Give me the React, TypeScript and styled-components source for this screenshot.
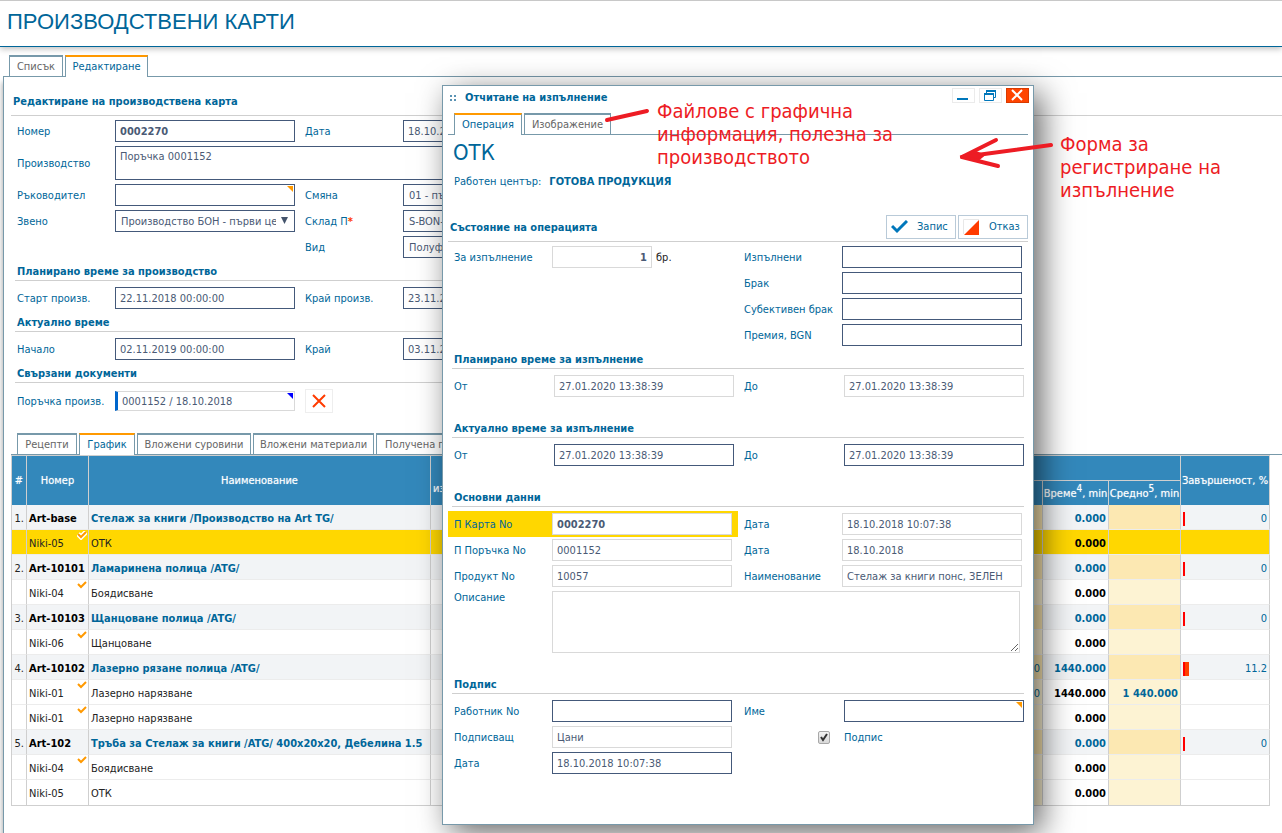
import React from 'react';
import type { ReactNode } from 'react';
import styled, { createGlobalStyle, css } from 'styled-components';

const color = {
  brand: '#006699',
  frame: '#7799aa',
  field: '#44597a',
  readonly: '#d9d9d9',
  value: '#4a5a75',
  rule: '#cfcfcf',
  accent: '#ff9900',
  highlight: '#ffd700',
  danger: '#ff3b00',
  note: '#ed1c24',
};

const GlobalStyle = createGlobalStyle`
  *, *::before, *::after { box-sizing: border-box; }
  body {
    margin: 0;
    background: #fff;
    color: #222;
    font: 11px/14px "DejaVu Sans Condensed", "DejaVu Sans", sans-serif;
  }
  input, textarea, select, button { font: inherit; margin: 0; }
`;

/* ---------- page frame ---------- */

const Page = styled.div`
  position: relative;
  display: flex;
  flex-direction: column;
  min-height: 100vh;
  overflow: hidden;
`;

const PageHeader = styled.header`
  height: 47px;
  padding-left: 7px;
  border-top: 1px solid #c8c8c8;
  border-bottom: 1px solid ${color.brand};
  box-shadow: 0 2px 6px rgba(0, 0, 0, 0.25);
`;

const PageTitle = styled.h1`
  margin: 0;
  font: 22px/41px "Liberation Sans", Arial, sans-serif;
  color: ${color.brand};
`;

const TabBar = styled.nav<{ $indent: number }>`
  display: flex;
  gap: 2px;
  padding-left: ${(p) => p.$indent}px;
`;

const Tab = styled.button<{ $active?: boolean; $width: number }>`
  flex: none;
  width: ${(p) => p.$width}px;
  height: 21px;
  padding: 0;
  white-space: nowrap;
  background: #fff;
  color: #666;
  border: 1px solid ${color.frame};
  border-top: 2px solid ${color.frame};
  border-bottom: 0;
  ${(p) =>
    p.$active &&
    css`
      position: relative;
      height: 22px;
      margin-bottom: -1px;
      color: ${color.brand};
      border-top-color: ${color.accent};
    `}
`;

const Panel = styled.main`
  flex: 1;
  margin-left: 3px;
  padding-left: 7px;
  border: solid ${color.frame};
  border-width: 1px 0 0 1px;
  box-shadow: -1px 6px 5px rgba(0, 0, 0, 0.3);
`;

const PageTabs = styled.div`
  padding-top: 8px;
`;

/* ---------- form parts ---------- */

const Heading = styled.h2`
  margin: 10px 0 2px;
  padding: 2px 0 0 2px;
  font-size: 11px;
  line-height: 26px;
  color: ${color.brand};
  border-bottom: 1px solid ${color.rule};
`;

const SubHeading = styled.h3<{ $spaced?: boolean }>`
  margin: ${(p) => (p.$spaced ? 18 : 0)}px 4px 4px;
  padding: 4px 0 0 2px;
  font-size: 11px;
  line-height: 16px;
  color: ${color.brand};
  border-bottom: 1px solid ${color.rule};
`;

const EditForm = styled.form`
  width: 578px;
`;

const Row = styled.div<{ $pair: number; $tall?: boolean }>`
  display: grid;
  grid-template-columns: ${(p) => p.$pair}px 1fr;
  min-height: ${(p) => (p.$tall ? 28 : 26)}px;
`;

const Pair = styled.div<{ $label?: number; $highlight?: boolean; $wide?: boolean; $second?: boolean }>`
  display: grid;
  grid-template-columns: ${(p) => p.$label ?? 104}px 1fr;
  align-items: center;
  ${(p) => p.$highlight && `background: ${color.highlight};`}
  ${(p) => p.$wide && 'grid-column: 1 / -1;'}
  ${(p) => p.$second && 'grid-column: 2;'}
`;

const Label = styled.label<{ $top?: boolean }>`
  padding: 2px 0 0 6px;
  color: ${color.brand};
  white-space: nowrap;
  ${(p) => p.$top && 'align-self: start; padding-top: 0;'}
`;

const Required = styled.span`
  font-weight: 700;
  color: ${color.danger};
`;

const fieldLook = css<{ $readonly?: boolean }>`
  background: #fff;
  color: ${color.value};
  border: 1px solid ${(p) => (p.$readonly ? color.readonly : color.field)};
  border-radius: 0;
  outline: 0;
`;

const Input = styled.input<{ $readonly?: boolean; $bold?: boolean; $amount?: boolean }>`
  ${fieldLook}
  display: block;
  width: ${(p) => (p.$amount ? 100 : 180)}px;
  height: 22px;
  padding: 1px 4px 0;
  font-weight: ${(p) => (p.$bold ? 700 : 400)};
  text-align: ${(p) => (p.$amount ? 'right' : 'left')};
`;

const TextArea = styled.textarea<{ $readonly?: boolean; $height: number }>`
  ${fieldLook}
  display: block;
  height: ${(p) => p.$height}px;
  width: 468px;
  padding: 3px 4px;
  resize: ${(p) => (p.$readonly ? 'both' : 'none')};
`;

const LinkInput = styled(Input)`
  height: 20px;
  border-left: 3px solid #0066cc;
  padding-top: 0;
`;

const FieldBox = styled.div`
  position: relative;
  width: 180px;
`;

const Corner = styled.svg`
  position: absolute;
  top: 2px;
  right: 2px;
  width: 6px;
  height: 6px;
`;

const Select = styled.select`
  ${fieldLook}
  display: block;
  appearance: none;
  width: 180px;
  height: 22px;
  padding: 2px 18px 0 5px;
`;

const SelectArrow = styled.svg`
  position: absolute;
  top: 7px;
  right: 7px;
  width: 7px;
  height: 7px;
  pointer-events: none;
`;

const Inline = styled.div`
  display: flex;
  align-items: center;
  gap: 4px;
`;

const Unit = styled.span`
  padding-top: 2px;
`;

const LinkedDoc = styled.div`
  display: flex;
  align-items: center;
  gap: 10px;
`;

const RemoveButton = styled.button`
  display: grid;
  place-items: center;
  width: 28px;
  height: 24px;
  padding: 0;
  background: #fff;
  border: 1px solid #eee;
`;

/* ---------- schedule table ---------- */

const DetailTabs = styled.div`
  margin-top: 18px;
  border-bottom: 1px solid ${color.frame};
`;

const Table = styled.table`
  table-layout: fixed;
  width: calc(100% - 12px);
  border-collapse: separate;
  border-spacing: 0;
  border: solid ${color.rule};
  border-width: 1px 0 1px 1px;
`;

const Col = styled.col<{ $w?: number }>`
  ${(p) => p.$w && `width: ${p.$w}px;`}
`;

const Th = styled.th<{ $line?: boolean }>`
  height: ${(p) => (p.$line ? 25 : 24)}px;
  padding: 0;
  white-space: nowrap;
  overflow: hidden;
  background: #3388bb;
  color: #fff;
  font-weight: 400;
  text-shadow: 0 0 1px rgba(255, 255, 255, 0.6);
  border-right: 1px solid ${color.rule};
  ${(p) => p.$line && `border-bottom: 1px solid ${color.rule};`}

  sup { font-size: 10px; line-height: 0; }
`;

const ThLow = styled(Th)`
  padding-top: 2px;
`;

const ThLeft = styled(Th)`
  padding: 17px 0 0 2px;
  text-align: left;
`;

type RowKind = 'item' | 'step' | 'current';

const Tr = styled.tr<{ $kind: RowKind }>`
  background: ${(p) => ({ item: '#f2f4f6', step: '#fff', current: color.highlight })[p.$kind]};
  &:last-child td { border-bottom: 0; }
`;

const Td = styled.td<{ $bold?: boolean; $blue?: boolean; $right?: boolean; $dark?: boolean; $shade?: RowKind }>`
  position: relative;
  height: 25px;
  padding: 3px 2px 0;
  white-space: nowrap;
  overflow: hidden;
  color: ${(p) => (p.$blue ? color.brand : p.$dark ? '#000' : '#222')};
  font-weight: ${(p) => (p.$bold ? 700 : 400)};
  text-align: ${(p) => (p.$right ? 'right' : 'left')};
  border-right: 1px solid ${color.rule};
  border-bottom: 1px solid #ececec;
  ${(p) => p.$shade === 'item' && 'background: #fce8b2;'}
  ${(p) => p.$shade === 'step' && 'background: #fdf3d3;'}
`;

const DoneMark = styled.svg`
  position: absolute;
  top: 1px;
  right: 1px;
  width: 10px;
  height: 9px;
`;

const Completion = styled.div`
  display: flex;
  justify-content: space-between;
  align-items: center;
`;

const Bar = styled.span<{ $partial: boolean }>`
  width: ${(p) => (p.$partial ? 6 : 2)}px;
  height: 14px;
  background: #ff4000;
  border-left: 2px solid #ff0000;
`;

/* ---------- dialog ---------- */

const Dialog = styled.section`
  position: absolute;
  top: 85px;
  left: 442px;
  width: 592px;
  padding: 0 5px 48px;
  background: #fff;
  border: 1px solid ${color.frame};
  box-shadow: 8px 8px 30px rgba(0, 0, 0, 0.6);
`;

const TitleBar = styled.header`
  display: flex;
  align-items: center;
  height: 22px;
  color: ${color.brand};
`;

const Grip = styled.svg`
  width: 7px;
  height: 7px;
  margin: 2px 8px 0 2px;
`;

const DialogTitle = styled.h2`
  flex: 1;
  margin: 0;
  padding-top: 2px;
  font-size: 11px;
`;

const WindowButtons = styled.div`
  display: flex;
  gap: 4px;
  margin-right: -1px;
  padding-bottom: 3px;
`;

const WindowButton = styled.button<{ $close?: boolean }>`
  display: grid;
  place-items: center;
  width: 23px;
  height: 15px;
  padding: 0;
  background: ${(p) => (p.$close ? '#ff4400' : '#fff')};
  border: 1px solid ${(p) => (p.$close ? '#d93a00' : '#ebebeb')};
`;

const DialogTabs = styled.div`
  margin-top: 5px;
  border-bottom: 1px solid ${color.frame};
`;

const OperationName = styled.div`
  padding: 2px 0 0 5px;
  font-size: 22px;
  line-height: 32px;
  color: ${color.brand};
`;

const WorkCenter = styled.p`
  margin: 0 0 20px;
  padding: 2px 0 0 6px;
  display: flex;
  gap: 8px;
  line-height: 22px;
  color: ${color.brand};
`;

const StateBar = styled.div`
  display: flex;
  align-items: center;
  gap: 2px;
  height: 29px;
  margin-bottom: 2px;
  border-bottom: 1px solid ${color.rule};
`;

const StateTitle = styled.h3`
  flex: 1;
  margin: 0;
  padding: 2px 0 0 2px;
  font-size: 11px;
  color: ${color.brand};
`;

const ActionButton = styled.button`
  display: flex;
  align-items: center;
  gap: 9px;
  width: 70px;
  height: 24px;
  padding: 0 0 0 4px;
  background: #fff;
  color: ${color.brand};
  border: 1px solid #b9cad8;
`;

const CheckCell = styled.div`
  position: relative;
  justify-self: end;
  margin-right: 14px;
  width: 12px;
  height: 13px;
`;

const CheckBox = styled.input`
  appearance: none;
  display: block;
  width: 12px;
  height: 13px;
  border: 1px solid #a8a8a8;
  border-radius: 2px;
  background: linear-gradient(#f2f2f2, #d8d8d8);
`;

const CheckGlyph = styled.svg`
  position: absolute;
  top: 0;
  left: 0;
  width: 12px;
  height: 13px;
  pointer-events: none;
`;

const CheckLabel = styled.label`
  padding-top: 2px;
  color: ${color.brand};
`;

const DescriptionPair = styled(Pair)`
  padding: 2px 0;
`;

/* ---------- annotations ---------- */

const Note = styled.p<{ $x: number; $y: number }>`
  position: absolute;
  left: ${(p) => p.$x}px;
  top: ${(p) => p.$y}px;
  margin: 0;
  font-size: 20px;
  line-height: 23px;
  white-space: nowrap;
  color: ${color.note};
`;

const Arrows = styled.svg`
  position: absolute;
  top: 100px;
  left: 600px;
  width: 460px;
  height: 80px;
  pointer-events: none;
`;

/* ---------- helpers ---------- */

type FieldProps = {
  id: string;
  label: ReactNode;
  value?: string;
  readonly?: boolean;
  bold?: boolean;
  highlight?: boolean;
  second?: boolean;
  labelWidth?: number;
  corner?: string;
};

function CornerMark({ fill }: { fill: string }) {
  return (
    <Corner viewBox="0 0 6 6" aria-hidden="true">
      <path d="M0 0H6V6Z" fill={fill} />
    </Corner>
  );
}

function Field({ id, label, value = '', readonly, bold, highlight, second, labelWidth, corner }: FieldProps) {
  return (
    <Pair $label={labelWidth} $highlight={highlight} $second={second}>
      <Label htmlFor={id}>{label}</Label>
      <FieldBox>
        <Input id={id} defaultValue={value} readOnly={readonly} $readonly={readonly} $bold={bold} />
        {corner && <CornerMark fill={corner} />}
      </FieldBox>
    </Pair>
  );
}

function SelectField({ id, label, value, second }: { id: string; label: ReactNode; value: string; second?: boolean }) {
  return (
    <Pair $second={second}>
      <Label htmlFor={id}>{label}</Label>
      <FieldBox>
        <Select id={id} defaultValue={value}>
          <option>{value}</option>
        </Select>
        <SelectArrow viewBox="0 0 7 7" aria-hidden="true">
          <path d="M0 0H7L3.5 7Z" fill="#44546c" />
        </SelectArrow>
      </FieldBox>
    </Pair>
  );
}

type ScheduleRow = {
  kind: RowKind;
  no?: string;
  code: string;
  name: string;
  done?: boolean;
  planned?: string;
  time: string;
  average?: string;
  percent?: string;
};

const schedule: ScheduleRow[] = [
  { kind: 'item', no: '1.', code: 'Art-base', name: 'Стелаж за книги /Производство на Art TG/', time: '0.000', percent: '0' },
  { kind: 'current', code: 'Niki-05', name: 'ОТК', done: true, time: '0.000' },
  { kind: 'item', no: '2.', code: 'Art-10101', name: 'Ламаринена полица /ATG/', time: '0.000', percent: '0' },
  { kind: 'step', code: 'Niki-04', name: 'Боядисване', done: true, time: '0.000' },
  { kind: 'item', no: '3.', code: 'Art-10103', name: 'Щанцоване полица /ATG/', time: '0.000', percent: '0' },
  { kind: 'step', code: 'Niki-06', name: 'Щанцоване', done: true, time: '0.000' },
  { kind: 'item', no: '4.', code: 'Art-10102', name: 'Лазерно рязане полица /ATG/', planned: '0', time: '1440.000', percent: '11.2' },
  { kind: 'step', code: 'Niki-01', name: 'Лазерно нарязване', done: true, planned: '0', time: '1440.000', average: '1 440.000' },
  { kind: 'step', code: 'Niki-01', name: 'Лазерно нарязване', done: true, time: '0.000' },
  { kind: 'item', no: '5.', code: 'Art-102', name: 'Тръба за Стелаж за книги /ATG/ 400x20x20, Дебелина 1.5', time: '0.000', percent: '0' },
  { kind: 'step', code: 'Niki-04', name: 'Боядисване', done: true, time: '0.000' },
  { kind: 'step', code: 'Niki-05', name: 'ОТК', time: '0.000' },
];

function ScheduleTable() {
  return (
    <Table>
      <colgroup>
        <Col $w={15} />
        <Col $w={62} />
        <Col $w={342} />
        <Col />
        <Col $w={72} />
        <Col $w={66} />
        <Col $w={72} />
        <Col $w={89} />
      </colgroup>
      <thead>
        <tr>
          <Th rowSpan={2}>#</Th>
          <Th rowSpan={2}>Номер</Th>
          <Th rowSpan={2}>Наименование</Th>
          <ThLeft rowSpan={2}>из</ThLeft>
          <Th colSpan={3} $line />
          <Th rowSpan={2}>Завършеност, %</Th>
        </tr>
        <tr>
          <Th />
          <ThLow>Време<sup>4</sup>, min</ThLow>
          <ThLow>Средно<sup>5</sup>, min</ThLow>
        </tr>
      </thead>
      <tbody>
        {schedule.map((row, i) => {
          const item = row.kind === 'item';
          return (
            <Tr key={i} $kind={row.kind}>
              <Td $right>{row.no}</Td>
              <Td $bold={item} $dark={item}>
                {row.code}
                {row.done && (
                  <DoneMark viewBox="0 0 10 9" aria-hidden="true">
                    {row.kind === 'current' && (
                      <path d="M1 3L4 6L9 1" fill="none" stroke="#fff" strokeWidth="5" />
                    )}
                    <path d="M1 3L4 6L9 1" fill="none" stroke={color.accent} strokeWidth="2" />
                  </DoneMark>
                )}
              </Td>
              <Td $bold={item} $blue={item}>{row.name}</Td>
              <Td />
              <Td $shade={row.kind} $right $blue>{row.planned}</Td>
              <Td $right $bold $dark $blue={item}>{row.time}</Td>
              <Td $shade={row.kind} $right $bold $blue>{row.average}</Td>
              <Td $blue>
                {row.percent && (
                  <Completion>
                    <Bar $partial={row.percent !== '0'} />
                    {row.percent}
                  </Completion>
                )}
              </Td>
            </Tr>
          );
        })}
      </tbody>
    </Table>
  );
}

function ReportDialog() {
  return (
    <Dialog role="dialog" aria-labelledby="dialog-title">
      <TitleBar>
        <Grip viewBox="0 0 7 7" aria-hidden="true">
          <path d="M0 0h2v2H0zM4 0h2v2H4zM0 4h2v2H0zM4 4h2v2H4z" fill="#5a93b4" />
        </Grip>
        <DialogTitle id="dialog-title">Отчитане на изпълнение</DialogTitle>
        <WindowButtons>
          <WindowButton aria-label="Минимизиране">
            <svg width="21" height="13" viewBox="0 0 21 13"><path d="M4 9h11v2H4z" fill="#0077bb" /></svg>
          </WindowButton>
          <WindowButton aria-label="Възстановяване">
            <svg width="21" height="13" viewBox="0 0 21 13" fill="none" stroke="#0077bb">
              <path d="M6.5 4V1.5H15.5V8.5H14M4.5 5.5H13.5V11.5H4.5Z" />
              <path d="M6 2H16M4 5H14" strokeWidth="2" />
            </svg>
          </WindowButton>
          <WindowButton $close aria-label="Затваряне">
            <svg width="21" height="13" viewBox="0 0 21 13"><path d="M5 1L15 11M15 1L5 11" stroke="#fff" strokeWidth="2" /></svg>
          </WindowButton>
        </WindowButtons>
      </TitleBar>

      <DialogTabs>
        <TabBar $indent={6}>
          <Tab type="button" $active $width={68}>Операция</Tab>
          <Tab type="button" $width={87}>Изображение</Tab>
        </TabBar>
      </DialogTabs>

      <OperationName>ОТК</OperationName>
      <WorkCenter>
        <span>Работен център:</span>
        <strong>ГОТОВА ПРОДУКЦИЯ</strong>
      </WorkCenter>

      <form>
        <StateBar>
          <StateTitle>Състояние на операцията</StateTitle>
          <ActionButton type="button">
            <svg width="17" height="14" viewBox="0 0 17 14" aria-hidden="true">
              <path d="M1 6L6 11L16 1" fill="none" stroke="#0077bb" strokeWidth="3" />
            </svg>
            Запис
          </ActionButton>
          <ActionButton type="button">
            <svg width="17" height="16" viewBox="0 0 17 16" aria-hidden="true">
              <path d="M0.5 15V0.5H16" fill="none" stroke="#e8e8e8" />
              <path d="M1 16L16 1V16Z" fill={color.danger} />
            </svg>
            Отказ
          </ActionButton>
        </StateBar>

        <Row $pair={290}>
          <Pair>
            <Label htmlFor="todo">За изпълнение</Label>
            <Inline>
              <Input id="todo" defaultValue="1" readOnly $readonly $bold $amount />
              <Unit>бр.</Unit>
            </Inline>
          </Pair>
          <Field id="done" label="Изпълнени" />
        </Row>
        <Row $pair={290}><Field id="scrap" label="Брак" second /></Row>
        <Row $pair={290}><Field id="subjective" label="Субективен брак" second /></Row>
        <Row $pair={290}><Field id="bonus" label="Премия, BGN" second /></Row>

        <SubHeading>Планирано време за изпълнение</SubHeading>
        <Row $pair={290}>
          <Field id="plan-from" label="От" value="27.01.2020 13:38:39" readonly labelWidth={106} />
          <Field id="plan-to" label="До" value="27.01.2020 13:38:39" readonly labelWidth={106} />
        </Row>

        <SubHeading $spaced>Актуално време за изпълнение</SubHeading>
        <Row $pair={290}>
          <Field id="real-from" label="От" value="27.01.2020 13:38:39" labelWidth={106} />
          <Field id="real-to" label="До" value="27.01.2020 13:38:39" labelWidth={106} />
        </Row>

        <SubHeading $spaced>Основни данни</SubHeading>
        <Row $pair={290}>
          <Field id="card-no" label="П Карта No" value="0002270" readonly bold highlight />
          <Field id="card-date" label="Дата" value="18.10.2018 10:07:38" readonly />
        </Row>
        <Row $pair={290}>
          <Field id="order-no" label="П Поръчка No" value="0001152" readonly />
          <Field id="order-date" label="Дата" value="18.10.2018" readonly />
        </Row>
        <Row $pair={290}>
          <Field id="product-no" label="Продукт No" value="10057" readonly />
          <Field id="product-name" label="Наименование" value="Стелаж за книги понс, ЗЕЛЕН" readonly />
        </Row>
        <Row $pair={290}>
          <DescriptionPair $wide>
            <Label htmlFor="description" $top>Описание</Label>
            <TextArea id="description" readOnly $readonly $height={62} />
          </DescriptionPair>
        </Row>

        <SubHeading $spaced>Подпис</SubHeading>
        <Row $pair={290}>
          <Field id="worker-no" label="Работник No" />
          <Field id="worker-name" label="Име" labelWidth={106} corner={color.accent} />
        </Row>
        <Row $pair={290}>
          <Field id="signer" label="Подписващ" value="Цани" readonly />
          <Pair $label={106}>
            <CheckCell>
              <CheckBox type="checkbox" id="signed" defaultChecked />
              <CheckGlyph viewBox="0 0 12 13" aria-hidden="true">
                <path d="M3 6L5 9L9 3" fill="none" stroke="#333" strokeWidth="2" />
              </CheckGlyph>
            </CheckCell>
            <CheckLabel htmlFor="signed">Подпис</CheckLabel>
          </Pair>
        </Row>
        <Row $pair={290}>
          <Field id="sign-date" label="Дата" value="18.10.2018 10:07:38" />
        </Row>
      </form>
    </Dialog>
  );
}

export default function App() {
  return (
    <Page>
      <GlobalStyle />
      <PageHeader>
        <PageTitle>ПРОИЗВОДСТВЕНИ КАРТИ</PageTitle>
      </PageHeader>

      <PageTabs>
        <TabBar $indent={9}>
          <Tab type="button" $width={54}>Списък</Tab>
          <Tab type="button" $active $width={83}>Редактиране</Tab>
        </TabBar>
      </PageTabs>

      <Panel>
        <Heading>Редактиране на производствена карта</Heading>
        <EditForm>
          <Row $pair={288}>
            <Field id="no" label="Номер" value="0002270" bold />
            <Field id="date" label="Дата" value="18.10.2018" />
          </Row>
          <Row $pair={288}>
            <DescriptionPair $wide>
              <Label htmlFor="production">Производство</Label>
              <TextArea id="production" defaultValue="Поръчка 0001152" $height={34} />
            </DescriptionPair>
          </Row>
          <Row $pair={288}>
            <Field id="manager" label="Ръководител" corner={color.accent} />
            <SelectField id="shift" label="Смяна" value="01 - първа" />
          </Row>
          <Row $pair={288}>
            <SelectField id="unit" label="Звено" value="Производство БОН - първи цех" />
            <SelectField id="store" label={<>Склад П<Required>*</Required></>} value="S-BON-01" />
          </Row>
          <Row $pair={288}>
            <SelectField id="type" label="Вид" value="Полуфабрикат" second />
          </Row>

          <SubHeading>Планирано време за производство</SubHeading>
          <Row $pair={288}>
            <Field id="start-plan" label="Старт произв." value="22.11.2018 00:00:00" />
            <Field id="end-plan" label="Край произв." value="23.11.2018 00:00:00" />
          </Row>

          <SubHeading>Актуално време</SubHeading>
          <Row $pair={288}>
            <Field id="start-real" label="Начало" value="02.11.2019 00:00:00" />
            <Field id="end-real" label="Край" value="03.11.2019 00:00:00" />
          </Row>

          <SubHeading>Свързани документи</SubHeading>
          <Row $pair={288} $tall>
            <Pair $wide>
              <Label htmlFor="source-order">Поръчка произв.</Label>
              <LinkedDoc>
                <FieldBox>
                  <LinkInput id="source-order" defaultValue="0001152 / 18.10.2018" $readonly />
                  <CornerMark fill="#0000ff" />
                </FieldBox>
                <RemoveButton type="button" aria-label="Премахване">
                  <svg width="14" height="14" viewBox="0 0 14 14">
                    <path d="M1 1L13 13M13 1L1 13" stroke={color.danger} strokeWidth="2" />
                  </svg>
                </RemoveButton>
              </LinkedDoc>
            </Pair>
          </Row>
        </EditForm>

        <DetailTabs>
          <TabBar $indent={6}>
            <Tab type="button" $width={60}>Рецепти</Tab>
            <Tab type="button" $active $width={56}>График</Tab>
            <Tab type="button" $width={114}>Вложени суровини</Tab>
            <Tab type="button" $width={121}>Вложени материали</Tab>
            <Tab type="button" $width={128}>Получена продукция</Tab>
          </TabBar>
        </DetailTabs>
        <ScheduleTable />
      </Panel>

      <ReportDialog />

      <Arrows viewBox="600 100 460 80" fill="none" stroke={color.note} aria-hidden="true">
        <path d="M607 120L647 111" strokeWidth="4" strokeLinecap="round" />
        <path d="M1051 145L962 157" strokeWidth="4" strokeLinecap="round" />
        <path d="M996 140L962 157L998 166" strokeWidth="4" strokeLinecap="round" strokeLinejoin="round" />
        <path d="M963 156L976 152L984 155L978 160Z" strokeWidth="2" fill={color.note} />
      </Arrows>
      <Note $x={657} $y={100}>
        Файлове с графична<br />информация, полезна за<br />производството
      </Note>
      <Note $x={1060} $y={133}>
        Форма за<br />регистриране на<br />изпълнение
      </Note>
    </Page>
  );
}
